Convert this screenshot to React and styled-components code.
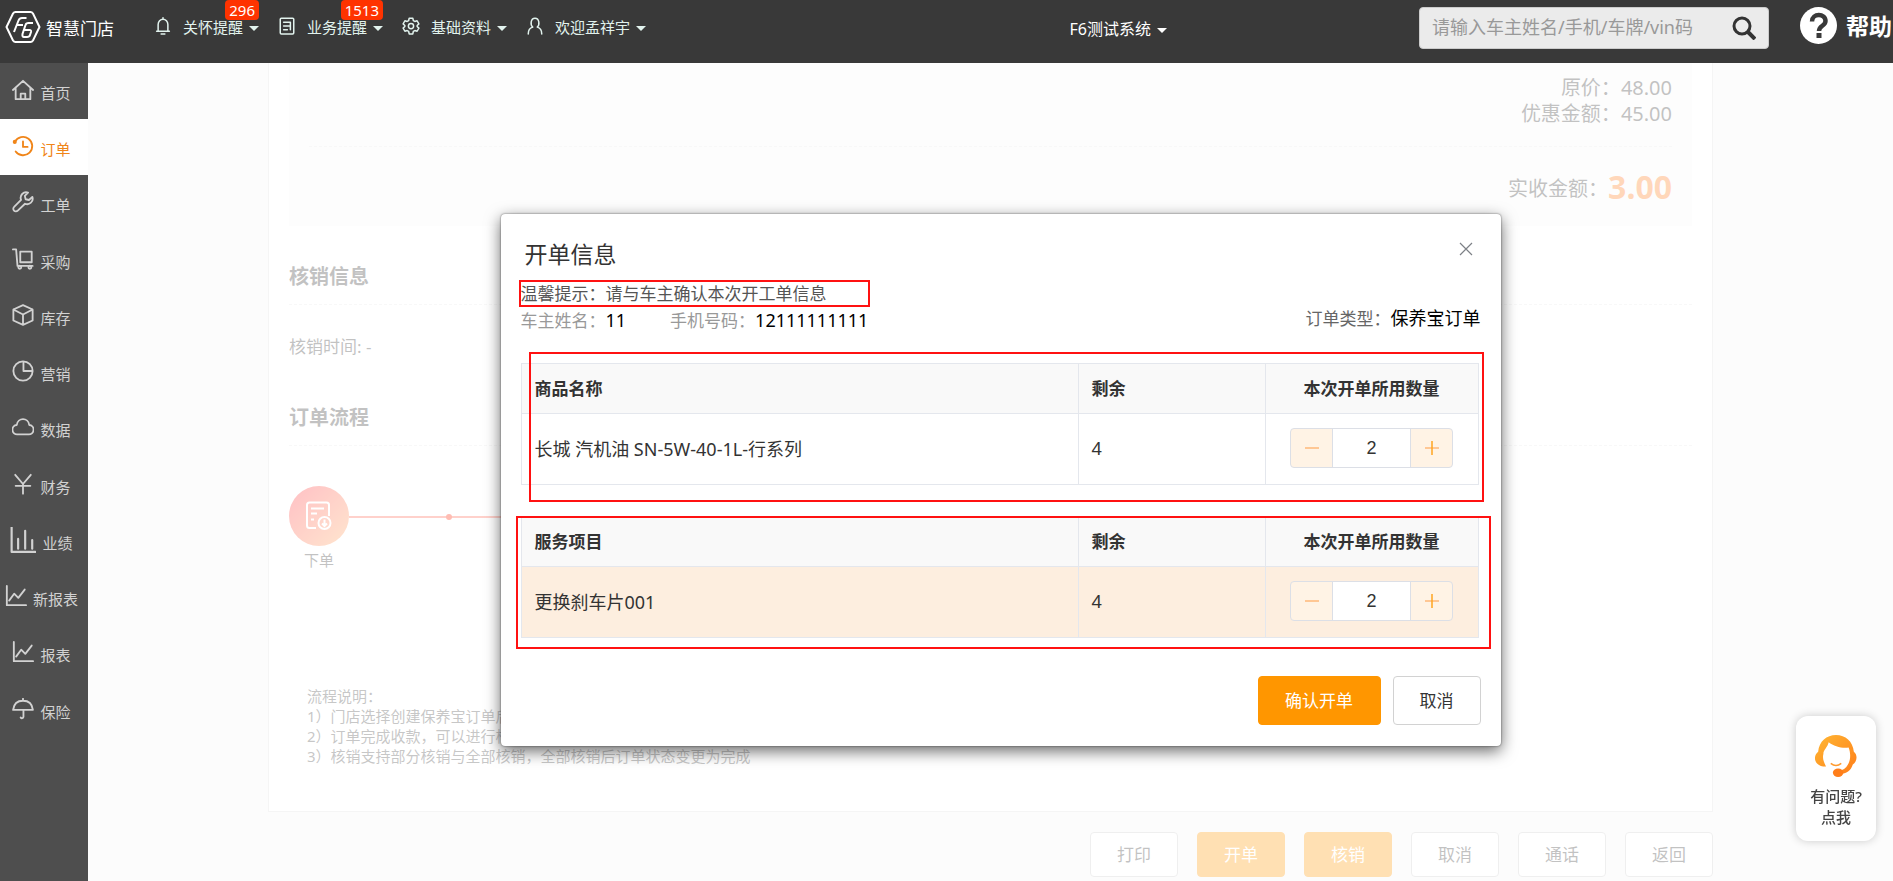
import React, { useState } from "react";
import styled, { createGlobalStyle } from "styled-components";

const menus = [
  { text: "关怀提醒", icon: "bell", badge: 296 },
  { text: "业务提醒", icon: "doc", badge: 1513 },
  { text: "基础资料", icon: "gear" },
  { text: "欢迎孟祥宇", icon: "user" },
];

const sideItems = [
  { text: "首页", icon: "home" },
  { text: "订单", icon: "clock", active: true },
  { text: "工单", icon: "wrench" },
  { text: "采购", icon: "cart" },
  { text: "库存", icon: "box" },
  { text: "营销", icon: "pie" },
  { text: "数据", icon: "cloud" },
  { text: "财务", icon: "yen" },
  { text: "业绩", icon: "bars" },
  { text: "新报表", icon: "chart" },
  { text: "报表", icon: "chart" },
  { text: "保险", icon: "umbrella" },
];

const actions = [
  { text: "打印" },
  { text: "开单", primary: true },
  { text: "核销", primary: true },
  { text: "取消" },
  { text: "通话" },
  { text: "返回" },
];

const icons = {
  bell: (
    <>
      <path d="M12 1v2M5.500 18V10a6.500 7 0 0 1 13 0v8M3.500 19h17" />
      <path d="M9.500 22.500h5" />
    </>
  ),
  doc: (
    <>
      <rect x="3" y="1.500" width="18" height="21" rx="1.500" />
      <path d="M7.500 7h9v5h-9M7.500 17h5M16.500 12v5" />
    </>
  ),
  gear: (
    <>
      <path d="M9.600 1.500h4.800l.7 3.200 2 1.200 3-.9 2.400 4.200-2.300 2.200v1.200l2.300 2.200-2.400 4.200-3-.9-2 1.200-.7 3.200H9.600l-.7-3.200-2-1.200-3 .9-2.400-4.200 2.300-2.200v-1.200L1.500 9.200l2.400-4.200 3 .9 2-1.200z" />
      <circle cx="12" cy="12" r="3.500" />
    </>
  ),
  user: (
    <path d="M9 13.500C5.500 10.500 6 1.500 12 1.500s6.500 9 3 12c3.500 1 6 4 6 9M9 13.500c-3.500 1-6 4-6 9" />
  ),
  home: <path d="M1 12 12 2l11 10M4 10v12h16V10M9.500 22v-6h5v6" />,
  clock: (
    <>
      <path d="M3.200 7.500A10 10 0 1 1 4 18" />
      <path d="M12 7v6h5" />
      <circle cx="3" cy="7.500" r="1.200" fill="currentColor" />
    </>
  ),
  wrench: (
    <path d="M17.500 1.800a6 6 0 0 0-7.600 7.900L2.300 17.300a2.800 2.800 0 0 0 4 4.200l7.900-7.600a6 6 0 0 0 8-7.500l-3.700 3.400-3.600-.8-.9-3.700z" />
  ),
  cart: (
    <>
      <path d="M1 1.500h3.500l1.500 18h16.500" />
      <rect x="9" y="4" width="12.500" height="11.500" />
      <circle cx="8.500" cy="21" r="1.600" />
      <circle cx="19.500" cy="21" r="1.600" />
    </>
  ),
  box: (
    <path d="M12 1.200 22.500 6v12L12 22.800 1.500 18V6zM1.500 6 12 11.500 22.500 6M12 11.500v11" />
  ),
  pie: (
    <>
      <circle cx="12" cy="12" r="10.500" />
      <path d="M12.500 2v10h9.500" />
    </>
  ),
  cloud: (
    <path d="M6 20a5 5 0 0 1-.8-10.200c1-8.500 12.600-8.500 13.600 0A5 5 0 0 1 18 20z" />
  ),
  yen: <path d="M3.500 2 12 12l8.500-10M12 12v10.500M4 14h16" />,
  bars: <path d="M1.500 0v23h22M7.500 20V11M14 20V3.500M20.500 20v-8" />,
  chart: <path d="M2 1v21h21M4.500 17 10 9.500l4.500 4.500L21.500 5" />,
  umbrella: (
    <path d="M12 .8v2M1.200 13C2 6 6.500 3 12 3s10 3 10.800 10zM12.500 13v7.500a1.600 1.600 0 0 1-3 .8" />
  ),
};

const Icon = ({ name, size = 22, width = 2 }) => (
  <svg
    width={size}
    height={size}
    viewBox="0 0 24 24"
    fill="none"
    stroke="currentColor"
    strokeWidth={width}
    strokeLinejoin="round"
    strokeLinecap="round"
    aria-hidden="true"
  >
    {icons[name]}
  </svg>
);

const Header = () => (
  <Top>
    <Logo href="#">
      <svg width="36" height="34" viewBox="0 0 36 34" fill="none">
        <path
          d="M10.500 2h15q1.500 0 2.500 1.500L34.500 17 28 30.500q-1 1.500-2.500 1.500h-15Q9 32 8 30.500L1.500 17 8 3.500Q9 2 10.500 2z"
          stroke="#fff"
          strokeWidth="2"
        />
        <path
          d="M21.500 8H17q-2.500 0-3.500 2.500L9 22M11.500 15H18"
          stroke="#fff"
          strokeWidth="2"
        />
        <path
          d="M28 13h-4.500q-2.500 0-3 2l-3 9q-.5 3 1.500 3h3q2.500 0 3-2l1-3q.5-2-1.500-2H19"
          stroke="#fff"
          strokeWidth="2"
        />
      </svg>
      智慧门店
    </Logo>
    <Menus>
      {menus.map((m) => (
        <MenuButton key={m.text} type="button">
          <Icon name={m.icon} size={18} />
          <span>{m.text}</span>
          <Caret />
          {m.badge && <Badge>{m.badge}</Badge>}
        </MenuButton>
      ))}
    </Menus>
    <System type="button">
      F6测试系统
      <Caret />
    </System>
    <Search>
      <input
        type="text"
        aria-label="搜索"
        placeholder="请输入车主姓名/手机/车牌/vin码"
      />
      <button type="button" aria-label="查询">
        <svg width="24" height="24" viewBox="0 0 24 24" fill="none">
          <circle cx="10" cy="10" r="8" stroke="#333" strokeWidth="3" />
          <path d="m16 16 7 7" stroke="#333" strokeWidth="4" />
        </svg>
      </button>
    </Search>
    <Help href="#">
      <svg width="37" height="37" viewBox="0 0 37 37" fill="none">
        <circle cx="18.500" cy="18.500" r="18.500" fill="#fff" />
        <path
          d="M12 14.500c0-8.500 13.500-8.500 13.500-.5 0 5-6.500 4.500-6.500 10"
          stroke="#393939"
          strokeWidth="4.500"
        />
        <rect x="16.500" y="26" width="5" height="5" fill="#393939" />
      </svg>
      帮助
    </Help>
  </Top>
);

const Stepper = ({ label }) => {
  const [count, setCount] = useState(2);
  return (
    <StepBox>
      <button
        type="button"
        aria-label="减少"
        onClick={() => setCount(Math.max(0, count - 1))}
      >
        <svg width="14" height="14" viewBox="0 0 14 14">
          <path d="M0 7h14" stroke="#ffc794" strokeWidth="2" />
        </svg>
      </button>
      <input
        type="text"
        aria-label={label}
        value={count}
        onChange={(e) => setCount(Number(e.target.value) || 0)}
      />
      <button
        type="button"
        aria-label="增加"
        onClick={() => setCount(Math.min(4, count + 1))}
      >
        <svg width="14" height="14" viewBox="0 0 14 14">
          <path d="M0 7h14" stroke="#ffc794" strokeWidth="2" />
          <path d="M7 0v14" stroke="#ffa51f" strokeWidth="1.500" />
        </svg>
      </button>
    </StepBox>
  );
};

const ItemTable = ({ title, name, active }) => (
  <Table>
    <colgroup>
      <col />
      <col width="187" />
      <col width="213" />
    </colgroup>
    <thead>
      <tr>
        <th>{title}</th>
        <th>剩余</th>
        <th className="center">本次开单所用数量</th>
      </tr>
    </thead>
    <tbody>
      <Row $active={active}>
        <td>{name}</td>
        <td>4</td>
        <td className="center">
          <Stepper label={`${name} 数量`} />
        </td>
      </Row>
    </tbody>
  </Table>
);

const OrderDialog = () => (
  <Mask>
    <Dialog role="dialog" aria-labelledby="dialog-title">
      <DialogHead>
        <h2 id="dialog-title">开单信息</h2>
        <button type="button" aria-label="关闭">
          <svg width="14" height="14" viewBox="0 0 14 14">
            <path d="m1 1 12 12M13 1 1 13" stroke="#7d8086" strokeWidth="1.200" />
          </svg>
        </button>
      </DialogHead>
      <Tip>温馨提示：请与车主确认本次开工单信息</Tip>
      <Meta>
        <div>
          车主姓名：<b>11</b>
        </div>
        <div>
          手机号码：<b>12111111111</b>
        </div>
        <div className="type">
          订单类型：<b>保养宝订单</b>
        </div>
      </Meta>
      <Goods>
        <ItemTable title="商品名称" name="长城 汽机油 SN-5W-40-1L-行系列" />
      </Goods>
      <Services>
        <ItemTable title="服务项目" name="更换刹车片001" active />
      </Services>
      <DialogFoot>
        <Confirm type="button">确认开单</Confirm>
        <Cancel type="button">取消</Cancel>
      </DialogFoot>
    </Dialog>
  </Mask>
);

const App = () => (
  <Page>
    <GlobalStyle />
    <Header />
    <Body>
      <Side>
        {sideItems.map((item) => (
          <SideLink key={item.text} href="#" $active={item.active}>
            <Icon name={item.icon} size={item.icon === "bars" ? 26 : 22} />
            <span>{item.text}</span>
          </SideLink>
        ))}
      </Side>
      <Content>
        <Card>
          <Summary>
            <Price>
              原价：<span>48.00</span>
            </Price>
            <Price>
              优惠金额：<span>45.00</span>
            </Price>
            <Total>
              实收金额：<strong>3.00</strong>
            </Total>
          </Summary>
          <SectionTitle>核销信息</SectionTitle>
          <Time>核销时间: -</Time>
          <SectionTitle>订单流程</SectionTitle>
          <Flow>
            <FlowStep>
              <FlowCircle>
                <svg
                  width="26"
                  height="30"
                  viewBox="0 0 26 30"
                  fill="none"
                  stroke="#fff"
                  strokeWidth="2"
                >
                  <path d="M10 27H3.500Q1 27 1 24.500V4q0-2.500 2.500-2.500h17Q23 1.500 23 4v11" />
                  <path d="M5 7.500h13M5 12.500h6M5 18.500h3" />
                  <circle cx="18.500" cy="22" r="6" />
                  <path d="M18.500 18.500v6M16 22.500l2.500 2.500 2.500-2.500" />
                </svg>
              </FlowCircle>
              下单
            </FlowStep>
            <FlowLine>
              <i />
            </FlowLine>
          </Flow>
          <Notes>
            <p>流程说明：</p>
            <p>1）门店选择创建保养宝订单后，订单状态为待付款</p>
            <p>2）订单完成收款，可以进行核销</p>
            <p>3）核销支持部分核销与全部核销，全部核销后订单状态变更为完成</p>
          </Notes>
        </Card>
        <Actions>
          {actions.map((a) => (
            <ActionButton key={a.text} type="button" $primary={a.primary}>
              {a.text}
            </ActionButton>
          ))}
        </Actions>
        <OrderDialog />
      </Content>
    </Body>
    <Support type="button">
      <svg width="42" height="42" viewBox="0 0 40 40" fill="none">
        <defs>
          <linearGradient id="hair" x1="0" y1="0" x2="1" y2="1">
            <stop offset="0" stopColor="#ffb733" />
            <stop offset="1" stopColor="#ff7e1a" />
          </linearGradient>
        </defs>
        <path
          d="M10.500 30C8 25 7 22 8 18c0-4 4-6 5-11 5 4 13 6 19 5 2 5 2 11 0 15-2 4-4 6-8 7v3c6 0 10-3 12-9 4-2 5-9 1-12C36 6 29 0 20 0S4 6 3 16c-4 3-4 9-.500 11.500 1.500 1.500 4 2.500 8 2.500z"
          fill="url(#hair)"
        />
        <path d="M15 27q5 4 10 0" stroke="#ff9a2e" strokeWidth="1.500" />
        <ellipse cx="22" cy="36" rx="5" ry="4" fill="#ff7e1a" />
      </svg>
      <span>有问题?</span>
      <span>点我</span>
    </Support>
  </Page>
);

export default App;

const GlobalStyle = createGlobalStyle`
  * {
    box-sizing: border-box;
  }

  body {
    margin: 0;
    overflow: hidden;
    background: #f5f5f5;
    color: #333;
    font-family: "Noto Sans", "Noto Sans CJK SC", sans-serif;
    font-size: 17px;
  }

  button,
  input {
    font: inherit;
    color: inherit;
    margin: 0;
    padding: 0;
    border: none;
    background: none;
  }

  button {
    cursor: pointer;
  }

  h2,
  h3,
  p {
    margin: 0;
  }

  a {
    color: inherit;
    text-decoration: none;
  }

  svg {
    flex: none;
  }
`;

const Page = styled.div`
  display: flex;
  flex-direction: column;
  height: 100vh;
`;

const Top = styled.header`
  display: flex;
  align-items: flex-start;
  flex: none;
  height: 63px;
  padding-left: 5px;
  overflow: hidden;
  background: #393939;
  color: #fff;
  white-space: nowrap;
`;

const Logo = styled.a`
  display: flex;
  align-items: center;
  gap: 5px;
  width: 149px;
  height: 54px;
  font-size: 17px;
`;

const Menus = styled.nav`
  display: flex;
  gap: 19px;
`;

const MenuButton = styled.button`
  position: relative;
  display: flex;
  align-items: center;
  height: 52px;
  font-size: 15px;
  color: #e2f3ee;

  span {
    margin-left: 11px;
  }
`;

const Caret = styled.i`
  margin: 4px 0 0 6px;
  border: 5px solid transparent;
  border-top-color: currentColor;
  border-bottom: none;
`;

const Badge = styled.em`
  position: absolute;
  top: 0;
  right: 0;
  padding: 0 4px;
  border-radius: 4px;
  background: #f30;
  color: #fff;
  font-size: 15px;
  font-style: normal;
  line-height: 20px;
`;

const System = styled.button`
  display: flex;
  align-items: center;
  height: 56px;
  margin: 0 252px 0 auto;
  font-size: 16px;
`;

const Search = styled.div`
  display: flex;
  align-items: center;
  width: 350px;
  height: 42px;
  margin: 7px 31px 0 0;
  padding: 0 12px;
  border: 1px solid #ccc;
  border-radius: 4px;
  background: #ebebeb;

  input {
    flex: 1;
    min-width: 0;
    padding-bottom: 2px;
    outline: none;
    font-size: 18px;

    &::placeholder {
      color: #999;
    }
  }

  button {
    display: flex;
  }
`;

const Help = styled.a`
  display: flex;
  align-items: center;
  gap: 9px;
  width: 93px;
  height: 50px;
  font-size: 23px;
  font-weight: bold;
`;

const Body = styled.div`
  display: flex;
  flex: 1;
  min-height: 0;
`;

const Side = styled.nav`
  width: 88px;
  flex: none;
  background: #4e4e4e;
`;

const SideLink = styled.a`
  display: flex;
  align-items: center;
  justify-content: center;
  gap: 6px;
  height: 56px;
  padding: 0 5px 2px 0;
  font-size: 15px;
  color: ${(p) => (p.$active ? "#f08519" : "#d2d2d2")};
  background: ${(p) => (p.$active ? "#fff" : "none")};

  &:nth-child(4n) {
    margin-top: 1px;
  }

  span {
    padding-top: 4px;
  }
`;

const Content = styled.main`
  position: relative;
  flex: 1;
  min-width: 0;
  padding: 0 180px;
`;

const Card = styled.section`
  height: 749px;
  padding: 0 20px;
  border: 1px solid #dcdcdc;
  border-top: none;
  background: #fff;
`;

const Summary = styled.div`
  display: flex;
  flex-direction: column;
  align-items: flex-end;
  height: 163px;
  padding: 12px 20px 0;
  background: #f7f7f7;
  font-size: 20px;
`;

const Price = styled.div`
  line-height: 26px;
`;

const Total = styled.div`
  display: flex;
  align-items: center;
  justify-content: flex-end;
  align-self: stretch;
  margin-top: 19px;
  padding-top: 17px;
  border-top: 1px dashed #e8e8e8;

  strong {
    color: #ff7a1a;
    font-size: 32px;
    line-height: 46px;
  }
`;

const SectionTitle = styled.h3`
  padding: 34px 0 10px;
  border-bottom: 1px dashed #e8e8e8;
  font-size: 20px;
  line-height: 34px;
`;

const Time = styled.div`
  padding: 28px 0 6px;
  color: #333;
  font-size: 17px;
  line-height: 28px;
`;

const Flow = styled.div`
  display: flex;
  margin-top: 40px;
`;

const FlowStep = styled.div`
  width: 60px;
  text-align: center;
  font-size: 15px;
  line-height: 28px;
`;

const FlowCircle = styled.div`
  display: flex;
  align-items: center;
  justify-content: center;
  height: 60px;
  border-radius: 50%;
  background: linear-gradient(135deg, #ff2d3c, #ffa85c);
`;

const FlowLine = styled.div`
  display: flex;
  align-items: center;
  width: 320px;
  height: 2px;
  margin-top: 30px;
  background: #ff6550;

  i {
    width: 6px;
    height: 6px;
    margin-left: 97px;
    border-radius: 50%;
    background: #f20;
  }
`;

const Notes = styled.div`
  padding: 112px 18px 0;
  color: #444;
  font-size: 15px;
  line-height: 20px;
`;

const Actions = styled.div`
  display: flex;
  justify-content: flex-end;
  gap: 19px;
  padding-top: 20px;
`;

const ActionButton = styled.button`
  width: 88px;
  height: 45px;
  padding-bottom: 3px;
  border: 1px solid ${(p) => (p.$primary ? "#ff9600" : "#c8c8c8")};
  border-radius: 4px;
  background: ${(p) => (p.$primary ? "#ff9600" : "#fff")};
  color: ${(p) => (p.$primary ? "#fff" : "#333")};
  font-size: 17px;
`;

/* covers the order page, the menus around it stay usable */
const Mask = styled.div`
  position: absolute;
  inset: 0;
  display: flex;
  align-items: flex-start;
  justify-content: center;
  padding: 151px 0 0 20px;
  background: rgba(255, 255, 255, 0.7);
`;

const Dialog = styled.div`
  width: 1000px;
  padding: 24px 20px 21px;
  border-radius: 4px;
  background: #fff;
  box-shadow: 0 5px 16px rgba(0, 0, 0, 0.6), 0 0 2px rgba(0, 0, 0, 0.6);
`;

const DialogHead = styled.div`
  display: flex;
  align-items: flex-start;
  justify-content: space-between;
  padding: 0 8px 0 4px;

  h2 {
    font-size: 23px;
    font-weight: normal;
    line-height: 32px;
  }

  button {
    display: flex;
    padding: 4px 0;
  }
`;

const Tip = styled.p`
  width: 351px;
  margin: 10px 0 0 -2px;
  border: 2px solid #f11;
  color: #555;
  line-height: 23px;
`;

const Meta = styled.div`
  display: flex;
  gap: 44px;
  color: #999;
  font-size: 17px;
  line-height: 27px;

  b {
    color: #000;
    font-size: 18px;
    font-weight: normal;
  }

  .type {
    margin-left: auto;
    color: #666;
    line-height: 23px;
  }
`;

const Goods = styled.div`
  position: relative;
  margin: 29px 2px 0 0;

  &::after {
    content: "";
    position: absolute;
    inset: -11px -5px -17px 8px;
    border: 2px solid #f11;
    pointer-events: none;
  }
`;

const Services = styled(Goods)`
  margin-top: 31px;

  &::after {
    inset: 0 -12px -11px -5px;
  }
`;

const Table = styled.table`
  width: 100%;
  table-layout: fixed;
  border-collapse: collapse;

  th,
  td {
    padding: 0 13px 2px;
    border: 1px solid #e4e7ed;
    text-align: left;
  }

  th {
    height: 50px;
    background: #f9f9f9;
    font-size: 17px;
  }

  td {
    height: 71px;
    font-size: 18px;
  }

  .center {
    text-align: center;
  }
`;

const Row = styled.tr`
  background: ${(p) => (p.$active ? "#fdeedf" : "#fff")};
`;

const StepBox = styled.div`
  display: inline-flex;
  width: 163px;
  height: 40px;
  border: 1px solid #dcdfe6;
  border-radius: 4px;
  background: #fff3e5;
  overflow: hidden;
  vertical-align: middle;

  button {
    display: flex;
    align-items: center;
    justify-content: center;
    width: 41px;
  }

  input {
    flex: 1;
    min-width: 0;
    border: solid #dcdfe6;
    border-width: 0 1px;
    background: #fff;
    font-family: "Liberation Sans", sans-serif;
    text-align: center;
  }
`;

const DialogFoot = styled.div`
  display: flex;
  justify-content: flex-end;
  gap: 12px;
  margin-top: 38px;
`;

const Cancel = styled.button`
  width: 88px;
  height: 49px;
  padding-bottom: 3px;
  border: 1px solid #d2d2d2;
  border-radius: 4px;
  background: #fff;
  font-size: 17px;
`;

const Confirm = styled(Cancel)`
  width: 123px;
  border-color: #ff9600;
  background: #ff9600;
  color: #fff;
`;

const Support = styled.button`
  position: fixed;
  right: 17px;
  bottom: 40px;
  display: flex;
  flex-direction: column;
  align-items: center;
  width: 80px;
  padding: 19px 0 13px;
  border-radius: 12px;
  background: #fff;
  box-shadow: 0 0 10px rgba(0, 0, 0, 0.2);
  color: #444;
  font-size: 15px;
  font-weight: 500;
  line-height: 21px;

  svg {
    margin-bottom: 9px;
  }
`;
